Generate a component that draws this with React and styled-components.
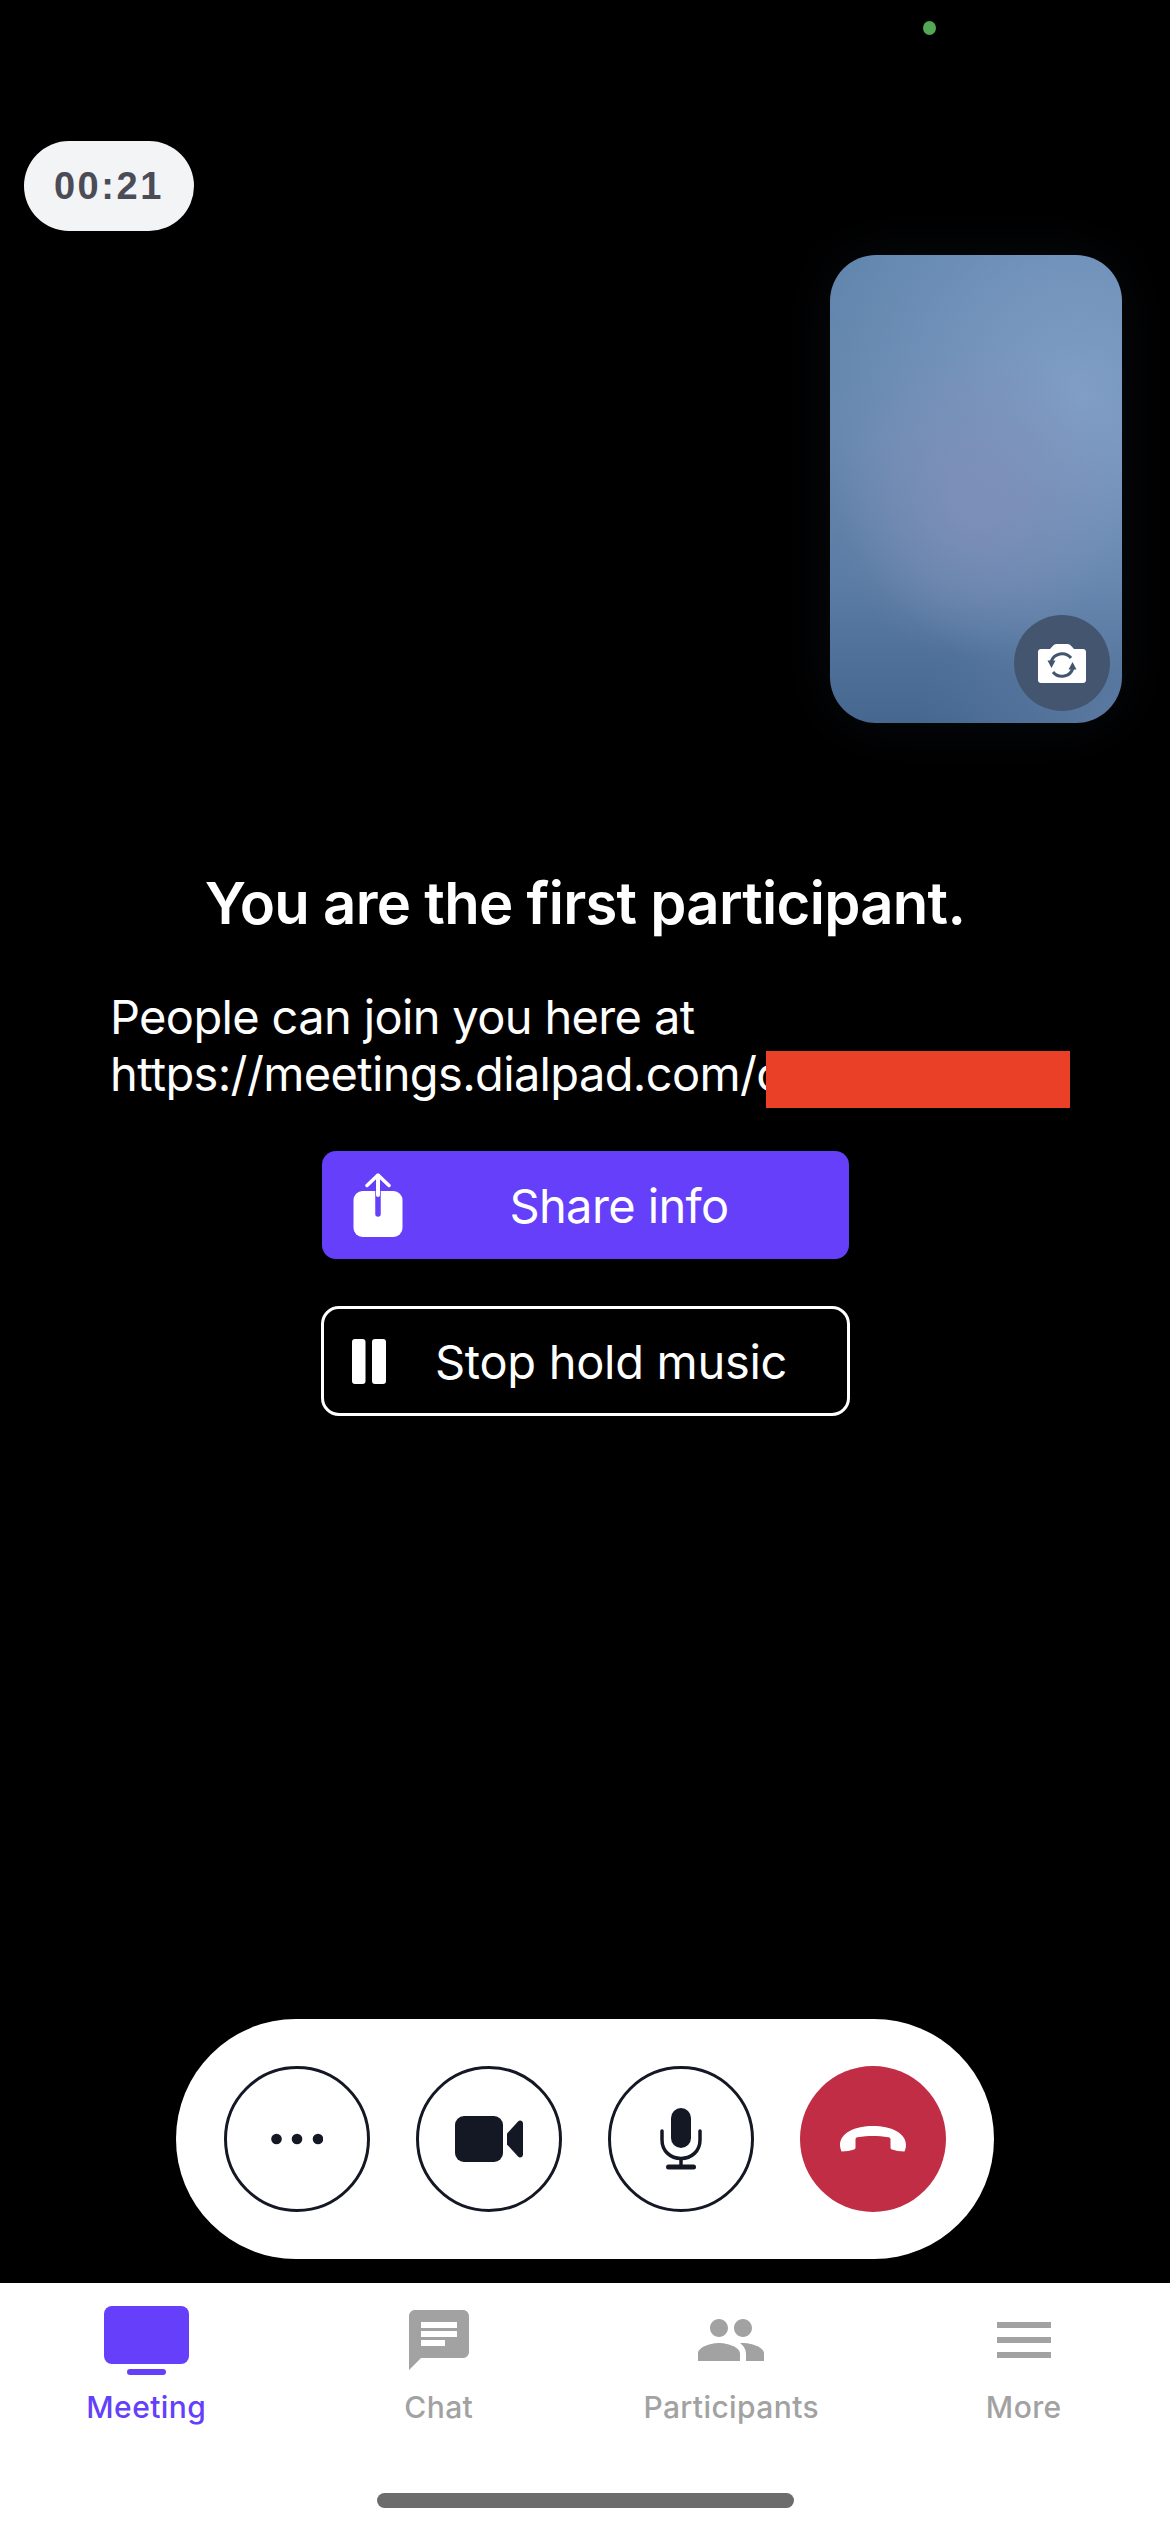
import React from 'react';
import styled, { createGlobalStyle } from 'styled-components';

const GlobalStyle = createGlobalStyle`
  html, body {
    margin: 0;
    padding: 0;
    background: #000;
  }
`;

const Screen = styled.div`
  position: relative;
  width: 1170px;
  height: 2532px;
  display: flex;
  flex-direction: column;
  overflow: hidden;
  background: #000;
  color: #fff;
  font-family: Inter, "Liberation Sans", sans-serif;
`;

const CameraDot = styled.span`
  position: absolute;
  top: 21px;
  left: 923px;
  width: 13px;
  height: 14px;
  border-radius: 50%;
  background: #52a855;
`;

const TopRow = styled.div`
  display: flex;
  justify-content: space-between;
  align-items: flex-start;
  padding: 141px 48px 0 24px;
`;

const Timer = styled.div`
  width: 170px;
  height: 90px;
  display: flex;
  align-items: center;
  justify-content: center;
  border-radius: 45px;
  background: #f3f4f6;
  color: #4b4c57;
  font-family: "Liberation Sans", Arial, sans-serif;
  font-size: 38px;
  font-weight: 700;
  letter-spacing: 2.6px;
`;

const SelfView = styled.div`
  position: relative;
  width: 292px;
  height: 468px;
  margin-top: 114px;
  border-radius: 46px;
  box-shadow: 0 0 60px rgba(70, 90, 130, 0.12);
  background:
    radial-gradient(ellipse 50% 34% at 50% 52%, rgba(128, 143, 184, 0.85) 0, rgba(128, 143, 184, 0) 100%),
    radial-gradient(ellipse 90% 62% at 85% 30%, rgba(128, 158, 198, 1) 0, rgba(128, 158, 198, 0) 100%),
    radial-gradient(ellipse 70% 30% at 100% 100%, rgba(100, 128, 168, 0.7) 0, rgba(100, 128, 168, 0) 100%),
    linear-gradient(180deg, #6186ad 0%, #6686ad 40%, #5b7ca4 70%, #456790 100%);
`;

const FlipButton = styled.button`
  position: absolute;
  right: 12px;
  bottom: 12px;
  width: 96px;
  height: 96px;
  padding: 0;
  display: flex;
  align-items: center;
  justify-content: center;
  border: 0;
  border-radius: 50%;
  background: #44566f;
`;

const Message = styled.section`
  display: flex;
  flex-direction: column;
  align-items: center;
  margin-top: 140px;
`;

const Heading = styled.h1`
  margin: 0;
  font-size: 58px;
  line-height: 80px;
  font-weight: 600;
  letter-spacing: -0.7px;
`;

const JoinText = styled.div`
  align-self: flex-start;
  margin: 45px 0 0 110px;
  font-size: 47px;
  line-height: 57px;
  font-weight: 400;
  letter-spacing: -0.65px;
`;

const LinkLine = styled.div`
  position: relative;
  white-space: nowrap;
`;

const Redaction = styled.span`
  position: absolute;
  left: 656px;
  top: 6px;
  width: 304px;
  height: 57px;
  background: #ea4027;
`;

const ActionButton = styled.button`
  box-sizing: border-box;
  width: ${props => (props.$outlined ? '529px' : '527px')};
  height: ${props => (props.$outlined ? '110px' : '108px')};
  margin-top: ${props => (props.$outlined ? '47px' : '49px')};
  padding: 0 ${props => (props.$outlined ? '28px' : '31px')};
  display: flex;
  align-items: center;
  color: #fff;
  border: ${props => (props.$outlined ? '3px solid #fff' : '0')};
  border-radius: ${props => (props.$outlined ? '18px' : '14px')};
  background: ${props => (props.$outlined ? 'transparent' : '#653ff9')};
  font-family: inherit;
  font-size: 47px;
  font-weight: 400;
  letter-spacing: ${props => (props.$outlined ? '-0.3px' : '-0.6px')};
`;

const ButtonLabel = styled.span`
  flex: 1;
  padding-left: 18px;
  text-align: center;
`;

const Spacer = styled.div`
  flex: 1;
`;

const Controls = styled.div`
  align-self: center;
  box-sizing: border-box;
  width: 818px;
  height: 240px;
  margin-bottom: 24px;
  padding: 0 48px;
  display: flex;
  align-items: center;
  justify-content: space-between;
  border-radius: 120px;
  background: #fff;
`;

const RoundButton = styled.button`
  box-sizing: border-box;
  width: 146px;
  height: 146px;
  padding: 0;
  display: flex;
  align-items: center;
  justify-content: center;
  border: ${props => (props.$danger ? '0' : '3px solid #141824')};
  border-radius: 50%;
  background: ${props => (props.$danger ? '#c02d45' : '#fff')};
`;

const TabBar = styled.nav`
  position: relative;
  height: 249px;
  padding-top: 21px;
  box-sizing: border-box;
  display: grid;
  grid-template-columns: repeat(4, 1fr);
  align-items: start;
  background: #fff;
`;

const Tab = styled.div`
  display: flex;
  flex-direction: column;
  align-items: center;
  color: ${props => (props.$active ? '#653ff9' : '#a2a2a2')};
`;

const TabIcon = styled.div`
  height: 72px;
  display: flex;
  align-items: center;
  justify-content: center;
`;

const TabLabel = styled.span`
  margin-top: 11px;
  font-size: 30px;
  line-height: 40px;
  font-weight: 500;
  letter-spacing: 0.4px;
`;

const HomeIndicator = styled.span`
  position: absolute;
  left: 377px;
  bottom: 24px;
  width: 417px;
  height: 15px;
  border-radius: 8px;
  background: #6c6c6c;
`;

const FlipCameraIcon = () => (
  <svg width="48" height="39" viewBox="0 0 48 39">
    <path
      fill="#fff"
      d="M3 5h9l3-3.2C16 .7 17 0 18.500 0h11c1.500 0 2.500.7 3.500 1.800L36 5h9c1.700 0 3 1.300 3 3v28c0 1.700-1.300 3-3 3H3c-1.700 0-3-1.300-3-3V8c0-1.700 1.300-3 3-3z"
    />
    <g fill="none" stroke="#44566f" strokeWidth="3">
      <path d="M13 18a11.500 11.500 0 0 1 20-4" />
      <path d="M35 24a11.500 11.500 0 0 1-20 4" />
    </g>
    <path fill="#44566f" d="M9.500 16.500h8L13.500 24zM30.500 25.500h8L34.500 18z" />
  </svg>
);

const ShareIcon = () => (
  <svg width="50" height="64" viewBox="0 0 50 64">
    <rect x="0.500" y="18" width="49" height="46" rx="9" fill="#fff" />
    <path d="M25 41V3" stroke="#653ff9" strokeWidth="5.500" strokeLinecap="round" fill="none" />
    <path d="M25 22V3" stroke="#fff" strokeWidth="4" strokeLinecap="round" fill="none" />
    <path d="M14 12.500 25 2l11 10.500" stroke="#fff" strokeWidth="3.500" strokeLinecap="round" strokeLinejoin="round" fill="none" />
  </svg>
);

const PauseIcon = () => (
  <svg width="34" height="45" viewBox="0 0 34 45" fill="#fff">
    <rect x="0" y="0" width="13.500" height="45" rx="3" />
    <rect x="20" y="0" width="14" height="45" rx="3" />
  </svg>
);

const DotsIcon = () => (
  <svg width="52" height="12" viewBox="0 0 52 12" fill="#141824">
    <circle cx="5.500" cy="6" r="5.300" />
    <circle cx="26" cy="6" r="5.300" />
    <circle cx="47" cy="6" r="5.300" />
  </svg>
);

const VideoIcon = () => (
  <svg width="68" height="46" viewBox="0 0 68 46" fill="#141824">
    <rect x="0" y="0" width="48" height="46" rx="9" />
    <path d="M52 17.500 63 5.500c1.800-1.900 5-.7 5 2v31c0 2.700-3.200 3.900-5 2L52 28.500z" />
  </svg>
);

const MicIcon = () => (
  <svg width="42" height="62" viewBox="0 0 42 62" fill="none">
    <rect x="11" y="0" width="20" height="40" rx="10" fill="#141824" />
    <path d="M2 23v9c0 11 8.500 18.500 19 18.500S40 43 40 32v-9" stroke="#141824" strokeWidth="3.500" strokeLinecap="round" />
    <path d="M21 50v9" stroke="#141824" strokeWidth="3.500" />
    <rect x="6" y="56.500" width="30" height="5" rx="2.500" fill="#141824" />
  </svg>
);

const HangUpIcon = () => (
  <svg width="66" height="26" viewBox="0 0 66 26">
    <path
      fill="#fff"
      d="M33 0C15 0 0 7 0 19c0 2 .5 4 1.500 6.500 5 0 9-.8 12.500-2 .8-.3 1.500-1 1.500-2v-8c0-1.200.7-2 2-2.300C23 10.300 28 10 33 10s10 .3 15.500 1.200c1.300.3 2 1.100 2 2.300v8c0 1 .7 1.700 1.500 2 3.500 1.200 7.500 2 12.500 2C65.500 23 66 21 66 19 66 7 51 0 33 0z"
    />
  </svg>
);

const MeetingIcon = () => (
  <svg width="85" height="69" viewBox="0 0 85 69" fill="currentColor">
    <rect x="0" y="0" width="85" height="58" rx="8" />
    <rect x="23" y="63" width="39" height="6" rx="3" />
  </svg>
);

const MaterialIcon = ({ d }) => (
  <svg width="72" height="72" viewBox="0 0 24 24" fill="currentColor">
    <path d={d} />
  </svg>
);

const tabs = [
  { label: 'Chat', d: 'M20 2H4c-1.100 0-2 .9-2 2v18l4-4h14c1.100 0 2-.9 2-2V4c0-1.100-.9-2-2-2zM6 9h12v2H6V9zm8 5H6v-2h8v2zm4-6H6V6h12v2z' },
  { label: 'Participants', d: 'M16 11c1.660 0 2.990-1.340 2.990-3S17.660 5 16 5c-1.660 0-3 1.340-3 3s1.340 3 3 3zm-8 0c1.660 0 2.990-1.340 2.990-3S9.660 5 8 5C6.340 5 5 6.340 5 8s1.340 3 3 3zm0 2c-2.330 0-7 1.170-7 3.500V19h14v-2.500c0-2.330-4.670-3.500-7-3.500zm8 0c-.29 0-.62.02-.97.05 1.160.84 1.970 1.970 1.970 3.450V19h6v-2.500c0-2.330-4.670-3.500-7-3.500z' },
  { label: 'More', d: 'M3 18h18v-2H3v2zm0-5h18v-2H3v2zm0-7v2h18V6H3z' },
];

const App = () => (
  <Screen>
    <GlobalStyle />
    <CameraDot />
    <TopRow>
      <Timer>00:21</Timer>
      <SelfView>
        <FlipButton>
          <FlipCameraIcon />
        </FlipButton>
      </SelfView>
    </TopRow>

    <Message>
      <Heading>You are the first participant.</Heading>
      <JoinText>
        <div>People can join you here at</div>
        <LinkLine>
          https://meetings.dialpad.com/c
          <Redaction />
        </LinkLine>
      </JoinText>
      <ActionButton>
        <ShareIcon />
        <ButtonLabel>Share info</ButtonLabel>
      </ActionButton>
      <ActionButton $outlined>
        <PauseIcon />
        <ButtonLabel>Stop hold music</ButtonLabel>
      </ActionButton>
    </Message>

    <Spacer />

    <Controls>
      <RoundButton><DotsIcon /></RoundButton>
      <RoundButton><VideoIcon /></RoundButton>
      <RoundButton><MicIcon /></RoundButton>
      <RoundButton $danger><HangUpIcon /></RoundButton>
    </Controls>

    <TabBar>
      <Tab $active>
        <TabIcon><MeetingIcon /></TabIcon>
        <TabLabel>Meeting</TabLabel>
      </Tab>
      {tabs.map(tab => (
        <Tab key={tab.label}>
          <TabIcon><MaterialIcon d={tab.d} /></TabIcon>
          <TabLabel>{tab.label}</TabLabel>
        </Tab>
      ))}
      <HomeIndicator />
    </TabBar>
  </Screen>
);

export default App;
